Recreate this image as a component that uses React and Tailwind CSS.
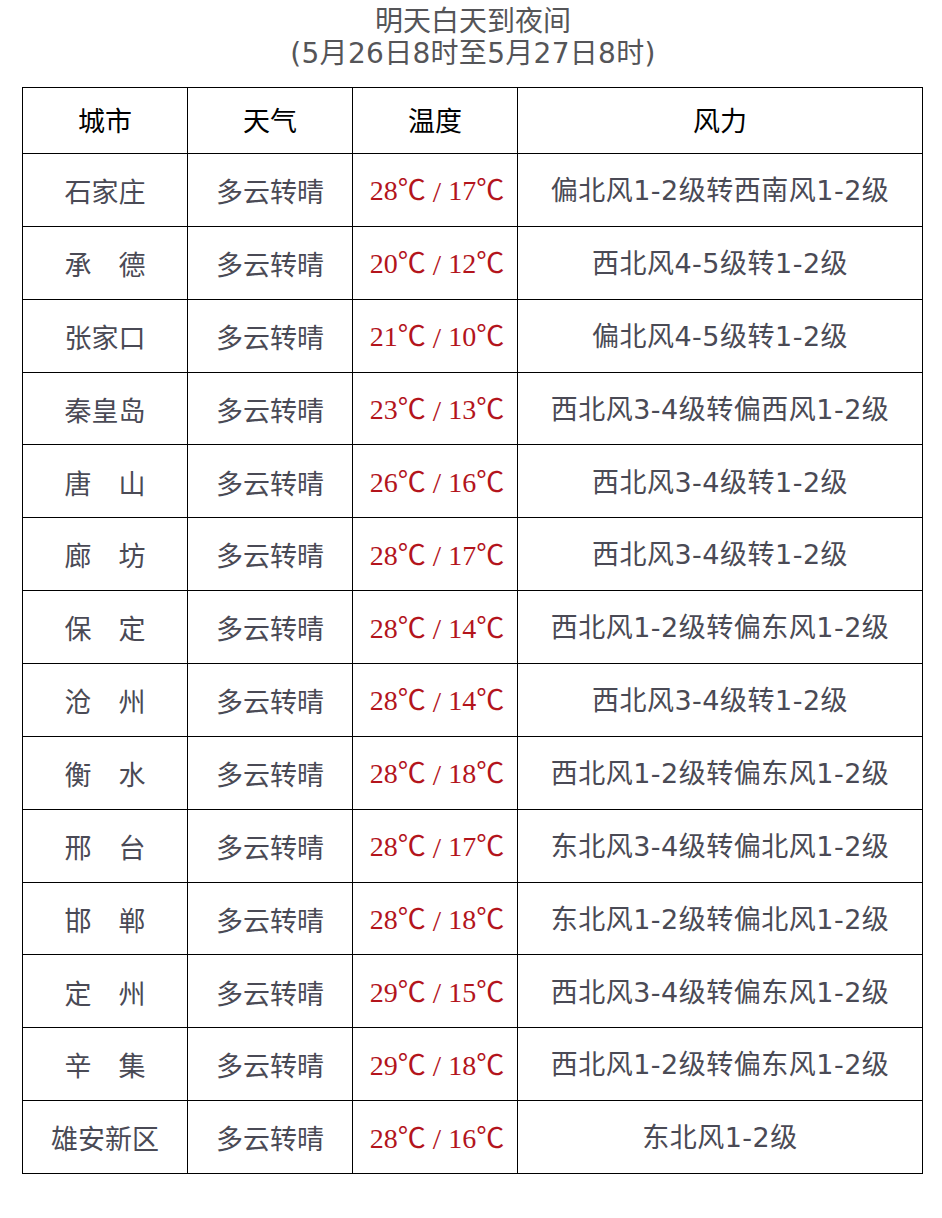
import React from "react";

const rows = [
  ["石家庄", "28℃", "17℃", "偏北风1-2级转西南风1-2级"],
  ["承　德", "20℃", "12℃", "西北风4-5级转1-2级"],
  ["张家口", "21℃", "10℃", "偏北风4-5级转1-2级"],
  ["秦皇岛", "23℃", "13℃", "西北风3-4级转偏西风1-2级"],
  ["唐　山", "26℃", "16℃", "西北风3-4级转1-2级"],
  ["廊　坊", "28℃", "17℃", "西北风3-4级转1-2级"],
  ["保　定", "28℃", "14℃", "西北风1-2级转偏东风1-2级"],
  ["沧　州", "28℃", "14℃", "西北风3-4级转1-2级"],
  ["衡　水", "28℃", "18℃", "西北风1-2级转偏东风1-2级"],
  ["邢　台", "28℃", "17℃", "东北风3-4级转偏北风1-2级"],
  ["邯　郸", "28℃", "18℃", "东北风1-2级转偏北风1-2级"],
  ["定　州", "29℃", "15℃", "西北风3-4级转偏东风1-2级"],
  ["辛　集", "29℃", "18℃", "西北风1-2级转偏东风1-2级"],
  ["雄安新区", "28℃", "16℃", "东北风1-2级"],
];

const cell = "flex items-center justify-center border-r border-b border-black";
const cjk = "font-['Noto_Sans_CJK_SC',sans-serif]";

export default function App() {
  return (
    <div className="min-h-[1218px] w-[942px] bg-white">
      <div className="pt-[6px] text-center text-[28px] leading-[32px] text-[#555558] font-['DejaVu_Sans','Noto_Sans_CJK_SC',sans-serif] pl-[4px]">
        <div>明天白天到夜间</div>
        <div className="tracking-[0.3px]">(5月26日8时至5月27日8时)</div>
      </div>

      <div className="ml-[22px] mt-[17px] w-[901px] grid grid-cols-[165px_165px_165px_405px] grid-rows-[66px_repeat(14,72.86px)] border-l border-t border-black">
        {["城市", "天气", "温度", "风力"].map((h) => (
          <div key={h} className={`${cell} ${cjk} text-[27px] text-black`}>
            {h}
          </div>
        ))}
        {rows.map(([city, hi, lo, wind]) => (
          <React.Fragment key={city}>
            <div className={`${cell} ${cjk} pt-[3px] text-[27px] text-[#4a4a55]`}>{city}</div>
            <div className={`${cell} ${cjk} pt-[3px] text-[27px] text-[#4a4a55]`}>多云转晴</div>
            <div className={`${cell} pt-[3px] pl-[4px] text-[28px] text-[#b3141c] font-['Liberation_Serif','Noto_Sans_CJK_SC',serif]`}>
              {hi}
              <span className="mx-[7px] text-[30px]">/</span>
              {lo}
            </div>
            <div className={`${cell} pt-[3px] tracking-[0.5px] text-[27px] text-[#4a4a55] font-['DejaVu_Sans','Noto_Sans_CJK_SC',sans-serif]`}>
              {wind}
            </div>
          </React.Fragment>
        ))}
      </div>
    </div>
  );
}
